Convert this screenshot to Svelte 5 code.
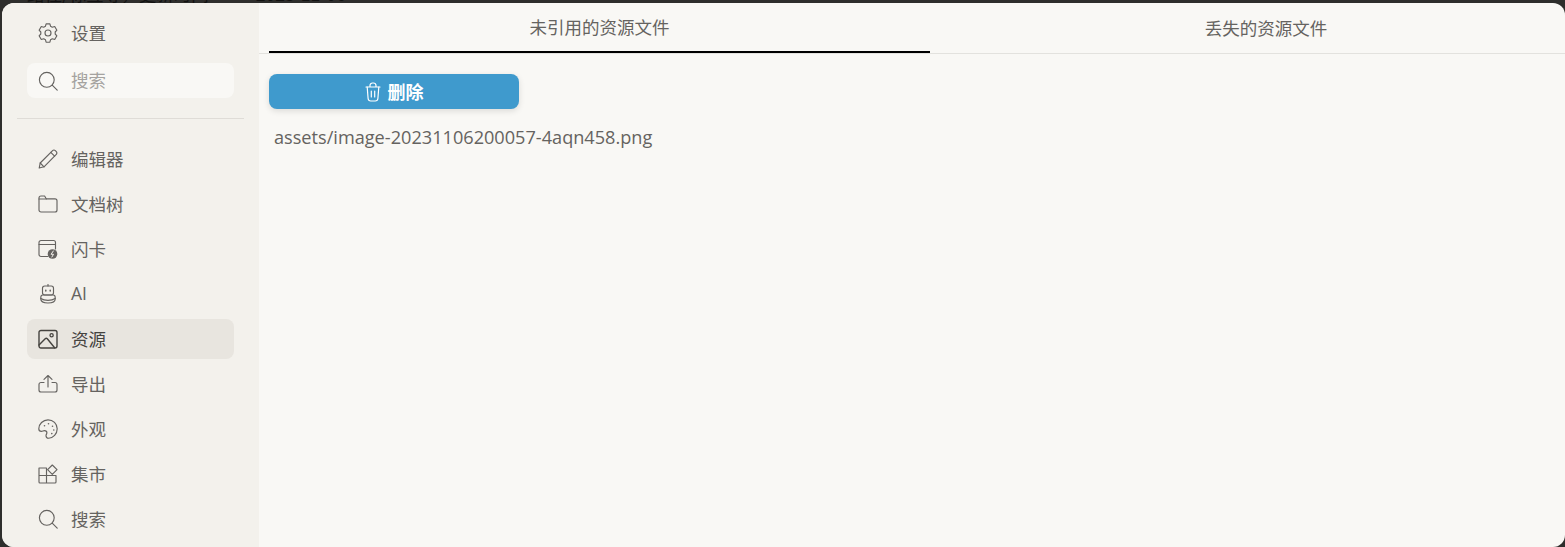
<script>
  const items = [
    { id: 'editor', label: '编辑器' },
    { id: 'tree', label: '文档树' },
    { id: 'card', label: '闪卡' },
    { id: 'ai', label: 'AI' },
    { id: 'assets', label: '资源', active: true },
    { id: 'export', label: '导出' },
    { id: 'look', label: '外观' },
    { id: 'market', label: '集市' },
    { id: 'search', label: '搜索' }
  ];
</script>

{#snippet icon(id)}
  <svg class="icon" viewBox="0 0 20 20" fill="none" stroke="currentColor" stroke-width="1.150" stroke-linecap="round" stroke-linejoin="round">
    {#if id === 'gear'}
      <path d="M8.100.8h3.800l.6 2.400 1.800 1 2.400-.7 2.200 3.700-1.700 1.800v2l1.700 1.800-2.200 3.700-2.400-.7-1.800 1-.6 2.400H8.100l-.6-2.400-1.800-1-2.400.7L1.100 12.800 2.800 11V9L1.100 7.200l2.200-3.700 2.400.7 1.800-1z" />
      <circle cx="10" cy="10" r="3" />
    {:else if id === 'search'}
      <circle cx="8.800" cy="8.800" r="7.400" />
      <path d="M14.200 14.200l5 5" />
    {:else if id === 'editor'}
      <path d="M1.200 19l1-5L14.600 1.600a1.900 1.900 0 0 1 2.700 0l1 1a1.900 1.900 0 0 1 0 2.700L6 17.800z" />
      <path d="M2.200 14l3.800 3.800M12.800 3.400l3.800 3.800" />
    {:else if id === 'tree'}
      <path d="M1 4a2 2 0 0 1 2-2h3.600l1.600 2.800H17a2 2 0 0 1 2 2V16a2 2 0 0 1-2 2H3a2 2 0 0 1-2-2z" />
      <path d="M1 5h7.200" />
    {:else if id === 'card'}
      <path d="M10 17.500H3a2 2 0 0 1-2-2V3.500a2 2 0 0 1 2-2h12.500a2 2 0 0 1 2 2V10" />
      <path d="M1 5.500h16.500" />
      <circle cx="14.500" cy="15" r="4.800" fill="currentColor" stroke="none" />
      <path d="M15.300 12l-2.200 3.300h2.400L13.900 18" stroke="#f3f1ec" stroke-width="1" />
    {:else if id === 'ai'}
      <path d="M10 .5v1.500" />
      <rect x="4.500" y="2" width="11" height="9" rx="2.200" />
      <path d="M7.800 6.300v.6M12.200 6.300v.6" stroke-width="1.500" />
      <path d="M2.800 13.500c0-1.500.6-2.500 2-2.500h10.400c1.400 0 2 1 2 2.500V15c0 2.500-3.200 4-7.200 4s-7.200-1.500-7.200-4z" />
      <path d="M2.800 14.500c2 1.300 4.600 1.800 7.200 1.800s5.200-.5 7.200-1.800" />
    {:else if id === 'assets'}
      <rect x="1" y="1.500" width="18" height="17.500" rx="2" stroke-width="1.400" />
      <path d="M1 16l6.200-6.300a1.500 1.500 0 0 1 2.100 0l7.300 9.100" stroke-width="1.400" />
      <circle cx="13.600" cy="6.300" r="1.600" stroke-width="1.300" />
    {:else if id === 'export'}
      <path d="M6 8.500H3a2 2 0 0 0-2 2V16a2 2 0 0 0 2 2h14a2 2 0 0 0 2-2v-5.500a2 2 0 0 0-2-2h-3" />
      <path d="M10 13V1.500M6 5.300l4-3.800 4 3.800" />
    {:else if id === 'look'}
      <path d="M10 .8c5.100 0 9.200 4 9.200 9 0 5.200-4.100 9.400-8.500 9.400-1.800 0-2.700-1.200-2.700-2.500 0-1.300.9-1.800.9-3 0-1.400-1.200-2.100-2.500-2.100-1 0-1.900.7-3 .7C1.900 12.300.8 11.400.8 9.700.8 5 5 .8 10 .8z" />
      <circle cx="6.500" cy="6.800" r=".8" fill="currentColor" stroke="none" />
      <circle cx="10.500" cy="4.800" r=".8" fill="currentColor" stroke="none" />
      <circle cx="14.500" cy="7.200" r=".8" fill="currentColor" stroke="none" />
      <circle cx="15.800" cy="11" r=".8" fill="currentColor" stroke="none" />
      <circle cx="13.800" cy="14.600" r=".8" fill="currentColor" stroke="none" />
    {:else if id === 'market'}
      <path d="M1 4h7.500v7.500H1zM1 11.500h7.500V19H2a1 1 0 0 1-1-1zM8.500 11.500H18V18a1 1 0 0 1-1 1H8.500z" />
      <path d="M14.300 1l4.700 4.700-4.700 4.700-4.700-4.700z" />
    {/if}
  </svg>
{/snippet}

<div class="backdrop">
  <span>路径/标签等，更新时间</span>
  <span>2023-11-06</span>
</div>
<div class="window">
  <aside class="sidebar">
    <div class="row settings">
      {@render icon('gear')}
      <span>设置</span>
    </div>
    <div class="row filter">
      {@render icon('search')}
      <span>搜索</span>
    </div>
    <hr />
    <nav>
      {#each items as item}
        <div class="row" class:active={item.active}>
          {@render icon(item.id)}
          <span>{item.label}</span>
        </div>
      {/each}
    </nav>
  </aside>

  <main>
    <div class="tabs">
      <div class="tab selected">未引用的资源文件</div>
      <div class="tab">丢失的资源文件</div>
    </div>
    <div class="content">
      <button>
        <svg class="trash" viewBox="0 0 16 20" fill="none" stroke="currentColor" stroke-width="1.200" stroke-linecap="round" stroke-linejoin="round">
          <path d="M1 5h14M5 5V3.500A2.500 2.500 0 0 1 7.500 1h1A2.500 2.500 0 0 1 11 3.500V5" />
          <path d="M2.200 5l.9 11.500A2.700 2.700 0 0 0 5.800 19h4.400a2.700 2.700 0 0 0 2.700-2.500L13.800 5" />
          <path d="M6.300 9v6M9.700 9v6" />
        </svg>
        <span>删除</span>
      </button>
      <div class="file">assets/image-20231106200057-4aqn458.png</div>
    </div>
  </main>
</div>

<style>
  :global(body) {
    background: #2e2e2c;
    overflow: hidden;
  }

  .backdrop {
    display: flex;
    align-items: flex-end;
    gap: 47px;
    height: 3px;
    padding-left: 27px;
    overflow: hidden;
    color: #121211;
    font: 17.5px/18px "Noto Sans CJK SC", sans-serif;
    white-space: nowrap;
  }

  .window {
    display: flex;
    height: 544px;
    margin-left: 2px;
    border-radius: 12px;
    overflow: hidden;
    background: #f9f8f5;
    color: #656360;
    font: 17.5px "Open Sans", "Noto Sans CJK SC", sans-serif;
  }

  .sidebar {
    flex: 0 0 257px;
    padding: 10px 15px 0;
    box-sizing: border-box;
    background: #f3f1ec;
  }

  .row {
    display: flex;
    align-items: center;
    gap: 13px;
    height: 40px;
    margin: 0 10px;
    padding-left: 11px;
    border-radius: 8px;
  }

  .row span {
    padding-bottom: 2px;
  }

  .icon {
    flex: none;
    width: 20px;
    height: 20px;
  }

  .filter {
    height: 35px;
    margin-top: 10px;
    background: #f9f8f5;
  }

  .filter span {
    color: #a5a3a0;
  }

  hr {
    height: 1px;
    margin: 20px 0;
    border: 0;
    background: #dfdcd7;
  }

  nav {
    display: flex;
    flex-direction: column;
    gap: 5px;
  }

  .active {
    background: #e8e5df;
    color: #45433f;
  }

  main {
    flex: 1;
    min-width: 0;
    overflow: hidden;
  }

  .tabs {
    display: grid;
    grid-template-columns: 661px 672px;
    height: 50px;
    padding-left: 10px;
    border-bottom: 1px solid #e3e2de;
  }

  .tab {
    display: flex;
    align-items: center;
    justify-content: center;
    padding-bottom: 2px;
    box-sizing: border-box;
  }

  .selected {
    border-bottom: 2px solid #000;
  }

  .content {
    padding: 20px 10px;
  }

  button {
    display: flex;
    align-items: center;
    justify-content: center;
    gap: 7px;
    width: 250px;
    height: 35px;
    padding: 0;
    border: 0;
    border-radius: 8px;
    background: #3f9acd;
    box-shadow: 0 2px 6px rgba(0, 0, 0, 0.12);
    color: #fff;
    font: bold 18px "Noto Sans CJK SC", sans-serif;
  }

  button span {
    padding-bottom: 1px;
  }

  .trash {
    width: 16px;
    height: 20px;
  }

  .file {
    margin: 16px 0 0 5px;
    font-size: 18.150px;
    line-height: 24px;
  }
</style>
